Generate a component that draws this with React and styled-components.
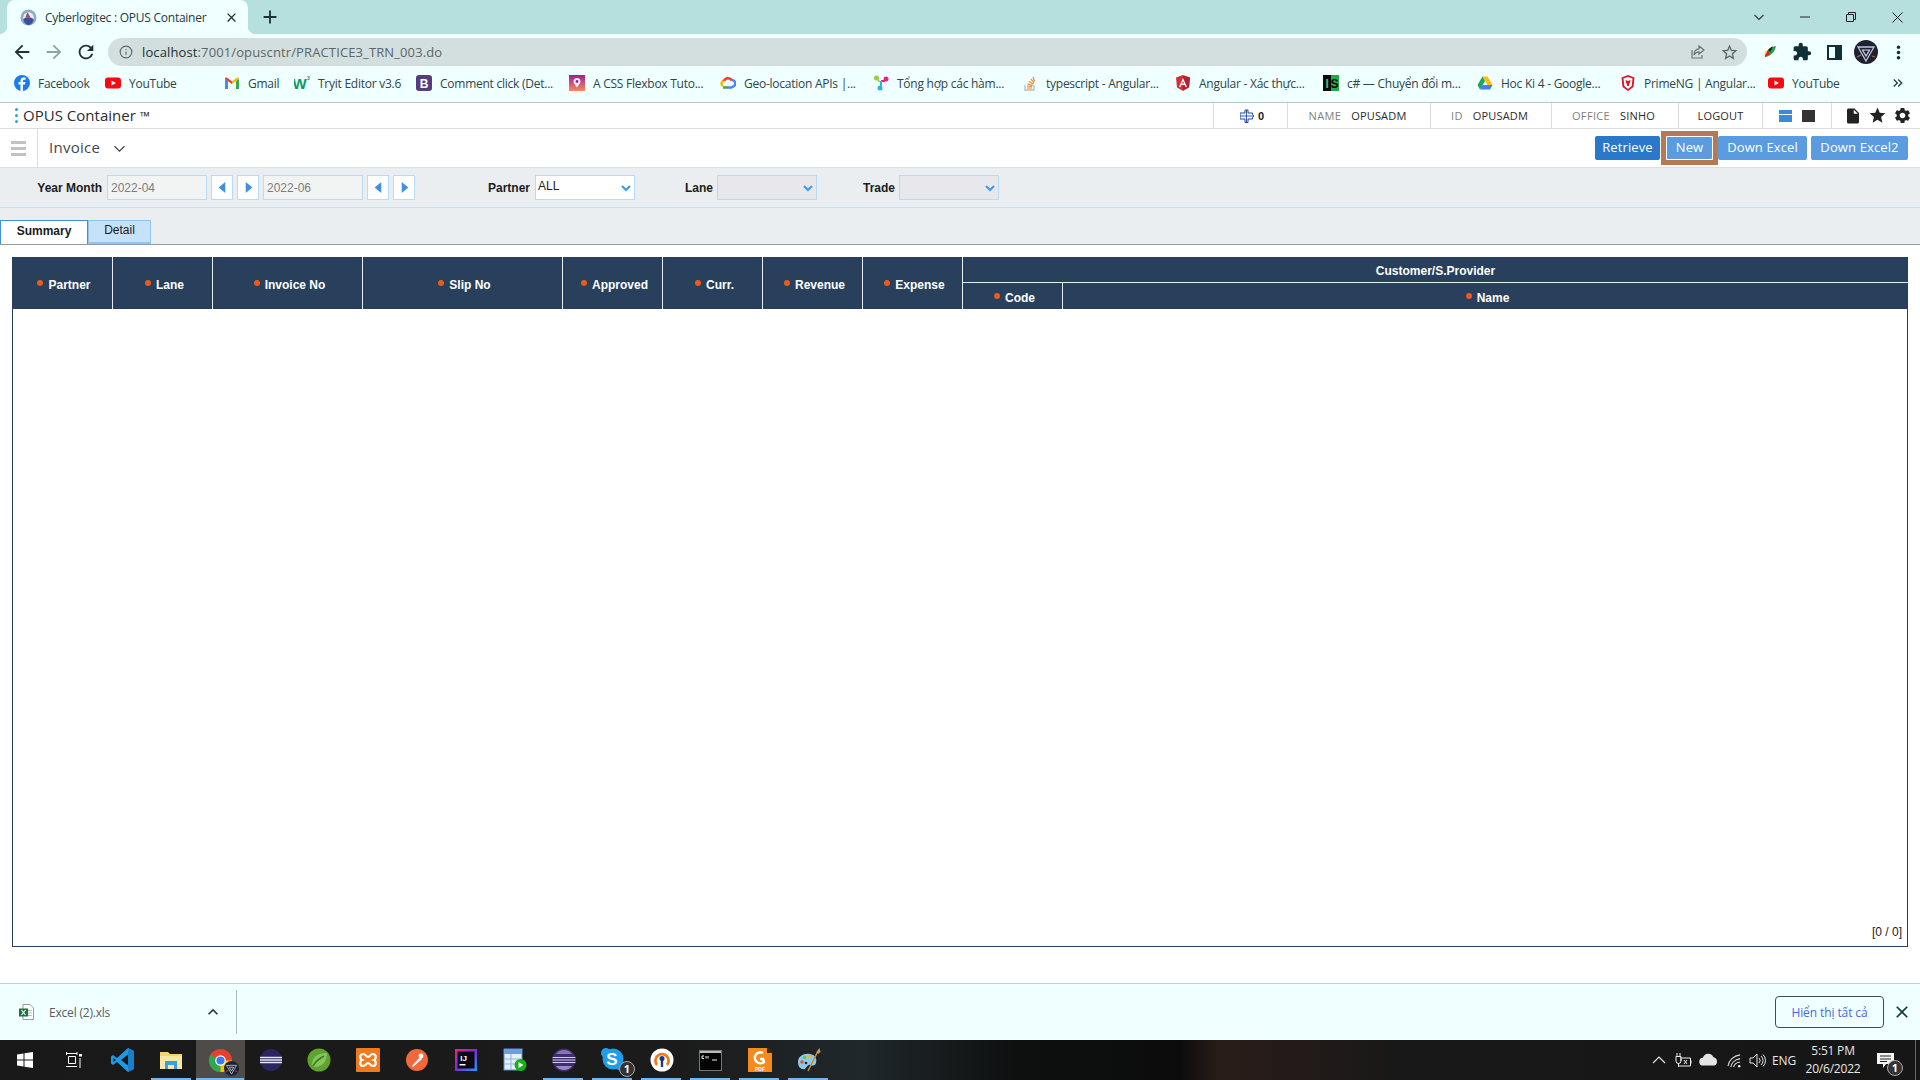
import React from 'react';
import styled, { createGlobalStyle } from 'styled-components';
import { MdArrowBack, MdArrowForward, MdRefresh, MdExtension, MdClose, MdAdd, MdStarBorder, MdMoreVert, MdStar, MdSettings, MdInsertDriveFile, MdExpandLess, MdKeyboardDoubleArrowRight } from 'react-icons/md';
import { Info } from 'lucide-react';

const Global = createGlobalStyle`
  html, body { margin: 0; padding: 0; background: #fff; overflow: hidden; }
  * { box-sizing: border-box; }
  body { font-family: "Open Sans", "Liberation Sans", sans-serif; }
`;
const ui = '"Open Sans", "Noto Sans", sans-serif';
const arial = '"Liberation Sans", Arial, sans-serif';

const Page = styled.div`width:1920px;height:1080px;display:flex;flex-direction:column;overflow:hidden;`;

/* browser chrome */
const TabStrip = styled.div`height:34px;background:#b5e0de;display:flex;align-items:flex-end;padding-left:7px;color:#1f3236;flex:none;`;
const BrowserTab = styled.div`
  position:relative;width:241px;height:34px;background:#f0ffff;border-radius:8px 8px 0 0;display:flex;align-items:center;
  padding:0 9px 0 13px;gap:8px;
  &::before,&::after{content:'';position:absolute;bottom:0;width:8px;height:8px;}
  &::before{left:-8px;background:radial-gradient(circle at 0 0,transparent 8px,#f0ffff 8.5px);}
  &::after{right:-8px;background:radial-gradient(circle at 100% 0,transparent 8px,#f0ffff 8.5px);}
`;
const TabTitle = styled.span`font:12px ${ui};letter-spacing:-.25px;color:#26393d;flex:1;white-space:nowrap;`;
const NewTab = styled.div`margin-left:11px;height:34px;display:flex;align-items:center;font-size:0;`;
const WindowControls = styled.div`margin-left:auto;display:flex;height:34px;align-items:center;`;
const WinBtn = styled.div`width:46px;height:34px;display:flex;align-items:center;justify-content:center;`;

const Toolbar = styled.div`height:32px;background:#f0ffff;display:flex;align-items:center;flex:none;padding-top:4px;`;
const NavGroup = styled.div`width:108px;display:flex;align-items:center;padding-left:11px;gap:10px;color:#1f3236;flex:none;`;
const Omnibox = styled.div`width:1639px;height:28px;border-radius:14px;background:#d3dfdf;display:flex;align-items:center;padding:0 8px 0 11px;color:#5c6a6c;flex:none;`;
const Url = styled.div`font:13px ${ui};letter-spacing:.12px;color:#5b6668;margin-left:9px;flex:1;white-space:nowrap;`;
const UrlHost = styled.span`color:#1f2e30;`;
const OmniActions = styled.div`display:flex;gap:14px;align-items:center;color:#566;`;
const ExtGroup = styled.div`flex:1;display:flex;align-items:center;padding-left:7px;color:#0f3036;`;
const ExtSlot = styled.div`width:32px;display:flex;justify-content:center;align-items:center;flex:none;`;

const Bookmarks = styled.div`height:37px;background:#f0ffff;border-bottom:1px solid #b5c9c9;display:flex;align-items:center;padding:0 0 2px 14px;flex:none;position:relative;`;
const Bookmark = styled.div`width:${p => p.$w}px;display:flex;align-items:center;gap:8px;flex:none;white-space:nowrap;font:12px ${ui};letter-spacing:-.25px;color:#2e4549;`;
const BookmarkMore = styled.div`margin-left:auto;padding-right:14px;display:flex;color:#21403f;`;

/* app header */
const AppHeader = styled.div`height:26px;display:flex;align-items:stretch;border-bottom:1px solid #dcdcdc;background:#fff;flex:none;`;
const AppTitle = styled.div`flex:1;display:flex;align-items:center;padding:0 0 2px 15px;gap:5px;font:15px ${ui};letter-spacing:.02px;color:#2c2c2c;white-space:nowrap;`;
const Dots = styled.span`display:flex;flex-direction:column;gap:3px;padding-top:2px;`;
const Dot = styled.i`display:block;width:3px;height:3px;border-radius:50%;background:#25a4e8;`;
const Tm = styled.span`font-size:13px;margin-left:4px;`;
const HeadCell = styled.div`width:${p => p.$w}px;border-left:1px solid #dcdcdc;display:flex;align-items:center;justify-content:center;gap:${p => p.$gap ?? 10}px;padding:${p => p.$pad ?? '0 3px 0 0'};font:11px ${ui};flex:none;`;
const HeadKey = styled.span`color:#808080;letter-spacing:.35px;`;
const HeadVal = styled.span`color:#2b2b2b;letter-spacing:.18px;`;
const Count = styled.b`font:bold 11px ${arial};color:#222;margin-left:-6px;`;
const Swatch = styled.i`display:block;width:13px;height:12px;background:${p => p.$c};`;
const SplitSwatch = styled(Swatch)`background:linear-gradient(#3a8ad6 0 4px,#fff 4px 5px,#3a8ad6 5px);`;

const ActionBar = styled.div`height:39px;display:flex;align-items:center;border-bottom:1px solid #dedede;background:#fff;flex:none;`;
const Burger = styled.div`width:38px;height:100%;border-right:1px solid #dedede;display:flex;flex-direction:column;justify-content:center;align-items:center;gap:3px;padding-right:1px;`;
const BurgerBar = styled.i`display:block;width:15px;height:3px;background:#c2c2c2;`;
const PageName = styled.div`margin-left:11px;padding-bottom:2px;font:15px ${ui};letter-spacing:.25px;color:#474747;width:65px;`;
const Actions = styled.div`margin-left:auto;padding-right:12px;display:flex;gap:4px;`;
const Btn = styled.button`
  position:relative;height:24px;border:0;border-radius:2px;padding:0 0 2px;width:${p => p.$w}px;
  background:${p => p.$primary ? '#2a78c9' : '#5b9be0'};color:#fff;font:13px ${ui};letter-spacing:.12px;
  ${p => p.$focus ? `
    margin:0 1px 0 2px;box-shadow:inset 0 0 0 1px #fff;
    &::after{content:'';position:absolute;inset:-5px;border:5px solid #b57a55;}
  ` : ''}
`;

/* filter */
const FilterBar = styled.div`height:40px;background:#eaeef0;border-bottom:1px solid #c3e0f7;display:flex;align-items:center;padding:0 0 0 36px;flex:none;`;
const FLabel = styled.label`width:${p => p.$w}px;margin-left:${p => p.$ml ?? 0}px;margin-right:5px;text-align:right;white-space:nowrap;font:bold 12px ${arial};color:#1c1c1c;flex:none;`;
const FInput = styled.div`width:100px;height:25px;background:#f2f4f4;border:1px solid #b9dcf6;font:12px ${arial};color:#7d7d7d;padding:0 0 0 3px;display:flex;align-items:center;flex:none;`;
const Step = styled.div`width:22px;height:25px;margin-left:4px;background:#fff;border:1px solid #b9dcf6;display:flex;align-items:center;justify-content:center;flex:none;`;
const Gap = styled.div`width:4px;flex:none;`;
const FSelect = styled.div`width:100px;height:25px;background:${p => p.$disabled ? '#e8e8ec' : '#fff'};border:1px solid #b9dcf6;font:12px ${arial};color:#222;padding:0 3px 0 2px;display:flex;align-items:center;justify-content:space-between;flex:none;`;
const SelText = styled.span`margin-bottom:3px;`;

/* tabs */
const TabsRow = styled.div`height:37px;background:#eaeef0;border-bottom:1px solid #9a9a9a;display:flex;align-items:flex-end;flex:none;`;
const SheetTab = styled.div`
  width:${p => p.$w}px;height:24px;display:flex;align-items:center;justify-content:center;font:${p => p.$on ? 'bold ' : ''}12px ${arial};color:#1b1b1b;
  background:${p => p.$on ? '#fff' : '#c5e2f8'};border:1px solid ${p => p.$on ? '#3f8fd9' : '#8fc5ef'};border-bottom:${p => p.$on ? '0' : '2px solid #8fc5ef'};padding-bottom:3px;
`;

/* grid */
const Content = styled.div`flex:1;background:#fff;padding:12px 12px 36px;min-height:0;display:flex;`;
const GridBox = styled.div`flex:1;border:1px solid #28405b;border-top:0;display:flex;flex-direction:column;`;
const Table = styled.table`table-layout:fixed;border-collapse:separate;border-spacing:0;margin:0 -1px;width:calc(100% + 2px);`;
const Th = styled.th`
  background:#28405b;color:#fff;font:bold 12px ${arial};padding:3px 0 0 ${p => p.$indent ?? 0}px;height:26px;text-align:center;white-space:nowrap;
  border-right:1px solid #e8edf2;
  &:last-child{border-right:0;}
  border-bottom:${p => p.$line ? '1px solid #e8edf2' : '0'};
`;
const Bullet = styled.i`display:inline-block;width:6px;height:6px;border-radius:50%;background:#f0591e;margin-right:5px;vertical-align:3px;`;
const GridBody = styled.div`flex:1;`;
const GridFoot = styled.div`text-align:right;font:12px ${arial};color:#222;padding:0 5px 7px 0;`;

/* download bar */
const DownloadBar = styled.div`height:57px;background:#f0ffff;border-top:1px solid #bfcfcf;display:flex;align-items:center;flex:none;`;
const FileItem = styled.div`width:237px;height:44px;border-right:1px solid #a9b8b8;display:flex;align-items:center;padding-left:19px;flex:none;color:#1d3a3c;`;
const FileName = styled.span`font:12px ${ui};letter-spacing:-.2px;color:#5a5c5c;margin-left:14px;width:154px;`;
const ShowAll = styled.button`margin-left:auto;width:109px;height:32px;border:1px solid #3f4d4d;border-radius:4px;background:#f0ffff;color:#4a69dc;font:12px ${ui};letter-spacing:-.1px;padding:0;`;
const BarClose = styled.div`width:36px;display:flex;justify-content:center;color:#14373c;font-size:0;`;

/* taskbar */
const Taskbar = styled.div`height:40px;display:flex;align-items:stretch;flex:none;background:linear-gradient(90deg,#191919 0,#1b1b1b 680px,#20282b 860px,#0e0f0f 1020px,#0c0c0c 1180px,#2a1d19 1220px,#181818 1400px,#161616 100%);`;
const TaskBtn = styled.div`
  position:relative;width:49px;display:flex;align-items:center;justify-content:center;flex:none;
  background:${p => p.$active ? '#4f4b49' : 'transparent'};
  ${p => p.$open ? `&::after{content:'';position:absolute;bottom:0;left:${p.$active ? 0 : 4}px;right:${p.$active ? 1 : 5}px;height:2px;background:#73b6ee;}` : ''}
`;
const Badge = styled.span`position:absolute;right:2px;bottom:3px;width:16px;height:16px;border-radius:50%;border:1px solid #aaa;background:#333;color:#fff;font:bold 11px/14px ${ui};text-align:center;`;
const AvatarBadge = styled.span`position:absolute;right:6px;bottom:4px;display:flex;`;
const NotifyBadge = styled(Badge)`right:12px;bottom:4px;`;
const Tray = styled.div`margin-left:auto;display:flex;align-items:center;color:#eee;`;
const TraySlot = styled.div`width:${p => p.$w}px;display:flex;justify-content:center;align-items:center;flex:none;`;
const TrayLang = styled.span`font:12px ${ui};letter-spacing:-.2px;color:#e8e8e8;`;
const Clock = styled.div`width:64px;text-align:center;font:12px/18px ${ui};letter-spacing:-.2px;color:#e8e8e8;white-space:nowrap;`;
const Notify = styled.div`position:relative;width:50px;display:flex;justify-content:center;height:40px;align-items:center;padding-right:9px;`;
const Peek = styled.div`width:5px;height:40px;border-left:1px solid #666;flex:none;`;

const Svg = ({ s = 16, v = '0 0 16 16', children, ...r }) => <svg width={s} height={s} viewBox={v} {...r}>{children}</svg>;

const Favicon = () => <Svg s={17}><circle cx="8" cy="8" r="7.5" fill="#8fa9c9" /><circle cx="8" cy="8" r="5" fill="#e8eef5" /><path d="M3 10c2-3 7-3 10 0-1 3-3 5-5 5s-4-2-5-5z" fill="#3b4f9a" /><path d="M7 3l3 5H5z" fill="#a44a58" /></Svg>;
const Avatar = ({ s = 24 }) => <Svg s={s} v="0 0 24 24"><circle cx="12" cy="12" r="12" fill="#1d2233" /><path d="M4 7h16L12 21z" fill="none" stroke="#c3c6d6" strokeWidth="1.3" /><path d="M8.5 10h7L12 16z" fill="none" stroke="#d0d2de" strokeWidth="1.2" /><path d="M3 17l4-2M18 16l3 1" stroke="#b8643a" strokeWidth="1.3" /></Svg>;
const Facebook = () => <Svg><circle cx="8" cy="8" r="8" fill="#1b7cea" /><path d="M9 16V9.5h2l.4-2.4H9V6c0-.8.3-1.2 1.3-1.2h1.2V2.6C11 2.5 10.300 2.400 9.700 2.400 7.700 2.400 6.500 3.600 6.500 5.700v1.400H4.500v2.400h2V16z" fill="#fff" /></Svg>;
const YouTube = () => <Svg><rect y="2.500" width="16" height="11" rx="3" fill="#f40a0f" /><path d="M6.500 5.500v5L11 8z" fill="#fff" /></Svg>;
const Gmail = () => <Svg><path d="M1 14V4l3 2v8z" fill="#4a87ee" /><path d="M12 14V6l3-2v10z" fill="#38a853" /><path d="M1 4c0-1.500 1.500-1.800 2.500-1L8 6.500 8 9 1 4z" fill="#e33b2e" /><path d="M15 4c0-1.500-1.500-1.800-2.500-1L8 6.500V9l7-5z" fill="#f6b704" /></Svg>;
const W3Text = styled.text`font:900 15px ${arial};fill:#0a9a62;`;
const W3Small = styled.text`font:bold 5px ${arial};fill:#0a9a62;`;
const W3 = () => <Svg><W3Text x="-1.5" y="14">W</W3Text><W3Small x="13" y="5">3</W3Small></Svg>;
const LogoLetter = styled.text`font:bold ${p => p.$s}px ${arial};fill:${p => p.$c};text-anchor:middle;`;
const Bootstrap = () => <Svg><rect width="16" height="16" rx="3" fill="#563d7c" /><LogoLetter x="8" y="12.500" $s={12} $c="#fff">B</LogoLetter></Svg>;
const CssBox = () => <Svg><defs><linearGradient id="cb" x1="0" y1="0" x2="0" y2="1"><stop offset="0" stopColor="#a61a9a" /><stop offset="1" stopColor="#f58a58" /></linearGradient></defs><rect width="16" height="16" fill="url(#cb)" /><path d="M8 3a3.500 3.500 0 0 1 3.500 3.500c0 2-2 3.500-3.500 6-1.500-2.500-3.500-4-3.500-6A3.500 3.500 0 0 1 8 3z" fill="#f5f0f5" /><circle cx="8" cy="6.500" r="1.400" fill="#a61a9a" /></Svg>;
const GCloud = () => <Svg><path d="M3 11a3 3 0 0 1 1-5.500" fill="none" stroke="#f6b704" strokeWidth="2.500" /><path d="M4 6a4.500 4.500 0 0 1 8-.5" fill="none" stroke="#e8402f" strokeWidth="2.500" /><path d="M11.500 5A3.500 3.500 0 0 1 12 12" fill="none" stroke="#4a87ee" strokeWidth="2.500" /><path d="M3 12.500h5" stroke="#34a853" strokeWidth="2.500" /><path d="M8 12.500h4" stroke="#4a87ee" strokeWidth="2.500" /></Svg>;
const Figma = () => <Svg><circle cx="3.500" cy="3" r="2.500" fill="#9ccc3b" /><path d="M4 4l3 3" stroke="#9ccc3b" strokeWidth="1.500" /><circle cx="13" cy="4" r="2.500" fill="#ef1d8c" /><path d="M8 6h4" stroke="#ef1d8c" strokeWidth="2" /><path d="M8 6v5" stroke="#25b5e8" strokeWidth="2" /><circle cx="7" cy="13" r="2.500" fill="#25b5e8" /></Svg>;
const StackO = () => <Svg><path d="M3 10v5h9v-5" fill="none" stroke="#bcbbbb" strokeWidth="1.300" /><path d="M5 13h5M5 11l5 .5M5.500 9l5 1.300M7 6.500l4.300 2.500M9 4l3 4M11 2l1.500 4.500" stroke="#f48024" strokeWidth="1.200" /></Svg>;
const Angular = () => <Svg><path d="M8 0l7 2.500-1 10L8 16l-6-3.500-1-10z" fill="#d52f3e" /><path d="M8 1v14l6-3 1-9.500z" fill="#b3202f" /><path d="M8 3L4 12h1.500l.8-2h3.400l.8 2H12zM7 8.500l1-2.500 1 2.500z" fill="#fff" /></Svg>;
const ISBox = () => <Svg><rect width="8" height="16" fill="#0a0a0a" /><rect x="8" width="8" height="16" fill="#24a84c" /><LogoLetter x="4" y="12.500" $s={12} $c="#3fc26a">I</LogoLetter><LogoLetter x="11.500" y="12.500" $s={12} $c="#0a0a0a">S</LogoLetter></Svg>;
const Drive = () => <Svg><path d="M5.500 1.500h5L15.500 10h-5z" fill="#fbbc04" /><path d="M5.500 1.500L.5 10 3 14.500 8 6z" fill="#1fa463" /><path d="M3 14.500h10l2.500-4.500h-10z" fill="#3f7fef" /></Svg>;
const Prime = () => <Svg><path d="M8 0l6.500 2.500-1 9.500L8 16l-5.500-4-1-9.500z" fill="#d91a2a" /><path d="M3.500 3.500L8 2l4.500 1.500-.8 7.500L8 14l-3.700-3z" fill="#fff" /><path d="M5.500 5l2.500 1 2.500-1-.5 3-1 1v2H7V9L6 8zM8 6v5" fill="#d91a2a" /></Svg>;
const Feather = () => <Svg><circle cx="8" cy="8" r="7.500" fill="#fff" /><path d="M3 13C4 7 8 3 14 2c-1 5-4 9-10 11z" fill="#17a74a" /><path d="M3 13c0-3 1-5 3-7l2 4z" fill="#e8241a" /><path d="M6 6c1-1.500 3-3 5-3.500L8 8z" fill="#1a1a1a" /><path d="M2 12l2-6 1 2z" fill="#f0e020" /></Svg>;
const PanelIcon = () => <Svg s={15} v="0 0 15 15"><path d="M0 0h15v15H0z" fill="#0f3036" /><rect x="2" y="2" width="6" height="11" fill="#f0ffff" /></Svg>;
const Share = () => <Svg><path d="M2 6v8h10v-3" fill="none" stroke="#667274" strokeWidth="1.200" /><path d="M9 2l5 4-5 4V7.800C6.500 7.800 5 9 4 11c0-3.500 2-6 5-6.200z" fill="none" stroke="#667274" strokeWidth="1.200" /></Svg>;
const Tri = ({ left }) => <Svg s={11} v="0 0 10 10"><path d={left ? 'M7.500 0v10L1.500 5z' : 'M2.500 0v10l6-5z'} fill="#3e90e4" /></Svg>;
const SelArrow = () => <Svg s={10} v="0 0 10 10"><path d="M1 3l4 4 4-4" fill="none" stroke="#3f9bee" strokeWidth="2.200" /></Svg>;
const Chev = ({ c = '#444', s = 10 }) => <Svg s={s} v="0 0 10 10"><path d="M0.500 3l4.500 4.500L9.500 3" fill="none" stroke={c} strokeWidth="1.100" /></Svg>;
const Crossbell = () => <Svg s={14} v="0 0 14 14"><path d="M5 1h3v3h4.500v1.500L14 7l-1.500 1.500V10H8v3.500H5V10H0V4h5z" fill="#fff" stroke="#1f45a8" strokeWidth="1" /><path d="M6.500 1v13M0 7h13" stroke="#1f45a8" strokeWidth=".9" /></Svg>;
const ExcelFile = () => <Svg s={16} v="0 0 16 16"><path d="M4 .5h7l3.500 3.500v11.500H4z" fill="#fff" stroke="#9a9a9a" /><rect x="9" y="6" width="4" height="1" fill="#a9c8b4" /><rect x="9" y="8.500" width="4" height="1" fill="#a9c8b4" /><rect x="9" y="11" width="4" height="1" fill="#a9c8b4" /><rect x="0" y="4.500" width="9" height="8" fill="#1d7044" /><path d="M2.500 6l4 5M6.500 6l-4 5" stroke="#fff" strokeWidth="1.200" /></Svg>;

const WinLogo = () => <Svg v="0 0 16 16"><path d="M0 2.500l6.500-1V7.500H0zM7.500 1.300L16 0v7.500H7.500zM0 8.500h6.500v6L0 13.500zM7.500 8.500H16V16l-8.500-1.300z" fill="#fff" /></Svg>;
const TaskView = () => <Svg s={16}><g fill="none" stroke="#fff" strokeWidth="1"><path d="M0 1.500h11M0 14.500h11M2.500 4.500h7v7h-7zM.5 0v3M11 0v3" /><path d="M14 6v10" /></g><rect x="13" y="2" width="3" height="2.500" fill="#fff" /></Svg>;
const VSCode = () => <Svg s={24} v="0 0 24 24"><path d="M17 0l6 3v18l-6 3L6 14l-4 3-2-1.500V8.500L2 7l4 3z" fill="#1f9ae8" /><path d="M17 0l6 3v18l-6 3z" fill="#1a7fc8" /><path d="M17 6.500v11L10 12z" fill="#191919" /><path d="M2.500 10L5 12l-2.500 2z" fill="#191919" /></Svg>;
const Folder = () => <Svg s={23} v="0 0 23 23"><path d="M0 3h8l2 2h12v15H0z" fill="#f6d56a" /><path d="M0 7h22v13H0z" fill="#fbe7a0" /><path d="M5 20v-8h12v8h-3v-4H8v4z" fill="#2ea4e8" /></Svg>;
const ChromeLogo = () => <Svg s={23} v="0 0 24 24"><circle cx="12" cy="12" r="12" fill="#e8402f" /><path d="M12 12L1.600 6A12 12 0 0 0 12 24l5-10z" fill="#2fa84e" /><path d="M12 12h12a12 12 0 0 1-12 12z" fill="#f6c20e" /><circle cx="12" cy="12" r="5.500" fill="#fff" /><circle cx="12" cy="12" r="4.300" fill="#3a7de8" /></Svg>;
const EclipseDark = () => <Svg s={24} v="0 0 24 24"><path d="M10 0a12 12 0 0 0 0 24A12 12 0 0 1 10 0z" fill="#f08a12" /><circle cx="13" cy="12" r="11" fill="#2b2560" /><path d="M2 9.500h22M2 12h22M2 14.500h22" stroke="#e8e8f5" strokeWidth="1.300" /></Svg>;
const Spring = () => <Svg s={24} v="0 0 24 24"><circle cx="12" cy="12" r="11.500" fill="#5fa32f" /><path d="M5 17C5 9 11 5 20 5c0 9-5 14-13 14z" fill="#86c55d" /><path d="M6 18c3-5 7-8 11-10" stroke="#3e7a1c" strokeWidth="1.500" fill="none" /></Svg>;
const Xampp = () => <Svg s={24} v="0 0 24 24"><rect width="24" height="24" rx="1" fill="#f07a1c" /><path d="M7 6c3 0 3 3 5 3s2-3 5-3c3.500 0 3.500 5 1 6 2.500 1 2.500 6-1 6-3 0-3-3-5-3s-2 3-5 3c-3.500 0-3.500-5-1-6-2.500-1-2.500-6 1-6z" fill="none" stroke="#fff" strokeWidth="2.200" /></Svg>;
const Postman = () => <Svg s={24} v="0 0 24 24"><circle cx="12" cy="12" r="11" fill="#f3683a" /><path d="M7 18l8-9 2 2-9 8z" fill="#fff" /><circle cx="16" cy="8" r="2.400" fill="#fff" /></Svg>;
const Intellij = () => <Svg s={24} v="0 0 24 24"><defs><linearGradient id="ij" x1="0" y1="0" x2="1" y2="1"><stop offset="0" stopColor="#e8277a" /><stop offset=".5" stopColor="#7a2ed8" /><stop offset="1" stopColor="#1f9de8" /></linearGradient></defs><rect width="22" height="22" x="1" y="1" fill="url(#ij)" /><rect x="3.500" y="3.500" width="17" height="17" fill="#0a0a12" /><LogoLetter x="9.500" y="12.500" $s={8} $c="#fff">IJ</LogoLetter><rect x="5.500" y="16" width="6" height="1.500" fill="#fff" /></Svg>;
const TablePlay = () => <Svg s={24} v="0 0 24 24"><rect x="1" y="1" width="18" height="21" fill="#e6eef8" stroke="#5b8fd0" /><rect x="1" y="1" width="18" height="5" fill="#6d9fde" /><path d="M1 11h18M1 16h18M8 6v16" stroke="#8fb4e4" /><circle cx="17.500" cy="17" r="6" fill="#12b312" /><path d="M15.500 14v6l5-3z" fill="#fff" /></Svg>;
const EclipsePurple = () => <Svg s={24} v="0 0 24 24"><circle cx="12" cy="12" r="11.500" fill="#3f2f70" /><path d="M.5 9.500h23M.5 12h23M.5 14.500h23" stroke="#d8c9ee" strokeWidth="1.200" /><path d="M4 6a10 10 0 0 1 16 0z" fill="#8a72b8" /><path d="M4 18a10 10 0 0 0 16 0z" fill="#9a86c4" /></Svg>;
const Skype = () => <Svg s={24} v="0 0 24 24"><circle cx="12" cy="11" r="10.500" fill="#1f9ee8" /><circle cx="5" cy="5" r="5" fill="#1f9ee8" /><circle cx="18" cy="17" r="5" fill="#1f9ee8" /><LogoLetter x="11" y="17" $s={17} $c="#fff">S</LogoLetter></Svg>;
const OpenVpn = () => <Svg s={24} v="0 0 24 24"><circle cx="12" cy="12" r="11.500" fill="#fff" /><path d="M6 18a8 8 0 1 1 12 0l-2-2a5.200 5.200 0 1 0-8 0z" fill="#ee7a1c" /><circle cx="12" cy="10.500" r="2.500" fill="#1a3a7a" /><rect x="10.800" y="11" width="2.400" height="8" fill="#1a3a7a" /></Svg>;
const Cmd = () => <Svg s={23} v="0 0 23 23"><rect x="0.500" y="1.500" width="22" height="20" fill="#050505" stroke="#777" /><rect x="1" y="2" width="21" height="2" fill="#bbb" /><path d="M3 7h2M3 9.500h2M3 7v2.500M7 7v2.500M9 7v2.500M13 11h5" stroke="#eee" strokeWidth="1" /></Svg>;
const PdfMark = () => <Svg s={24} v="0 0 24 24"><path d="M0 0h19l5 5v19H0z" fill="#f58a1f" /><path d="M19 0h2l3 3v2h-5z" fill="#3a2a10" /><path d="M15 5a5.500 5.500 0 1 0 1 9l-1-3h-3" fill="none" stroke="#fff" strokeWidth="2.500" /><LogoLetter x="12" y="22.500" $s={5} $c="#fff">PDF</LogoLetter></Svg>;
const Paint = () => <Svg s={24} v="0 0 24 24"><path d="M1 14c0-6 6-9 12-8s7 5 6 9c-.8 3-4 3-6 2-2-1-3 2-5 4-4 1-7-2-7-7z" fill="#8ecae8" /><circle cx="5" cy="14" r="1.800" fill="#e8503a" /><circle cx="7.500" cy="9.500" r="1.800" fill="#6cc24a" /><circle cx="12" cy="8.500" r="1.800" fill="#f6b704" /><circle cx="9" cy="15" r="1.300" fill="#223" /><path d="M11 23L21 3" stroke="#c88a3c" strokeWidth="1.500" /><path d="M19.500 4l3-4 1 4-2.500 2z" fill="#c89a5c" /></Svg>;

const Cloud = () => <Svg s={20} v="0 0 18 12"><path d="M4 11a3.500 3.500 0 0 1-.5-7A5 5 0 0 1 13 3.500a4 4 0 0 1 1 7.500z" fill="#e4e4e4" /></Svg>;
const Wifi = () => <Svg s={15} v="0 0 16 16"><g fill="none" stroke="#ddd" strokeWidth="1.100"><path d="M1 14C2 8 7 3 14 2" /><path d="M4 15c.5-4 4-8 10-9" /><path d="M7 15c.5-2.500 3-5 7-5.500" /></g><circle cx="13" cy="14" r="1.300" fill="#fff" /></Svg>;
const Speaker = () => <Svg s={17} v="0 0 17 17"><g fill="none" stroke="#e6e6e6" strokeWidth="1"><path d="M1 6v5h3l4 4V2L4 6z" /><path d="M10 6a3.500 3.500 0 0 1 0 5M12 4a6 6 0 0 1 0 9M14 2.500a8.500 8.500 0 0 1 0 12" /></g></Svg>;
const Plug = () => <Svg s={17} v="0 0 17 17"><g fill="none" stroke="#eee" strokeWidth="1"><path d="M6 5v4M1 9V4.500h5V9a2.500 2.500 0 0 1-5 0M3.500 11v4M2 4.500V1M5 4.500V1" /><path d="M7 6h8.500v8H3.500" /><path d="M16 8.500v3M9 8l3 4M12 8l-3 4" /></g></Svg>;
const Caret = () => <Svg s={14} v="0 0 14 14"><path d="M1 10l6-6 6 6" fill="none" stroke="#eee" strokeWidth="1.100" /></Svg>;
const Bubble = () => <Svg s={17} v="0 0 17 17"><path d="M0 1h17v11H9l-3 4v-4H0z" fill="#f4f4f4" /><path d="M3 4h11M3 7h11M3 9.500h7" stroke="#222" /></Svg>;

const marks = [
  [Facebook, 'Facebook', 91], [YouTube, 'YouTube', 119], [Gmail, 'Gmail', 70], [W3, 'Tryit Editor v3.6', 122],
  [Bootstrap, 'Comment click (Det...', 153], [CssBox, 'A CSS Flexbox Tuto...', 151], [GCloud, 'Geo-location APIs  |...', 153],
  [Figma, 'Tổng hợp các hàm...', 149], [StackO, 'typescript - Angular...', 153], [Angular, 'Angular - Xác thực...', 148],
  [ISBox, 'c# — Chuyển đổi m...', 154], [Drive, 'Hoc Ki 4 - Google...', 143], [Prime, 'PrimeNG | Angular...', 148], [YouTube, 'YouTube', 80],
];

const Head = ({ children, ...r }) => <Th $indent={4} {...r}><Bullet />{children}</Th>;

export default function App() {
  return (
    <Page>
      <Global />
      <TabStrip>
        <BrowserTab>
          <Favicon />
          <TabTitle>Cyberlogitec : OPUS Container</TabTitle>
          <MdClose size={15} />
        </BrowserTab>
        <NewTab><MdAdd size={22} /></NewTab>
        <WindowControls>
          <WinBtn><Chev c="#333" /></WinBtn>
          <WinBtn><Svg s={10} v="0 0 10 10"><path d="M0 5h10" stroke="#222" /></Svg></WinBtn>
          <WinBtn><Svg s={10} v="0 0 10 10"><path d="M.5 2.500h7v7h-7zM2.500 2.500v-2h7v7h-2" fill="none" stroke="#222" /></Svg></WinBtn>
          <WinBtn><Svg s={11} v="0 0 11 11"><path d="M.5.500l10 10M10.500.500l-10 10" stroke="#222" /></Svg></WinBtn>
        </WindowControls>
      </TabStrip>
      <Toolbar>
        <NavGroup>
          <MdArrowBack size={22} />
          <MdArrowForward size={22} color="#8fa3a5" />
          <MdRefresh size={22} />
        </NavGroup>
        <Omnibox>
          <Info size={14} />
          <Url><UrlHost>localhost</UrlHost>:7001/opuscntr/PRACTICE3_TRN_003.do</Url>
          <OmniActions>
            <Share />
            <MdStarBorder size={19} />
          </OmniActions>
        </Omnibox>
        <ExtGroup>
          <ExtSlot><Feather /></ExtSlot>
          <ExtSlot><MdExtension size={20} /></ExtSlot>
          <ExtSlot><PanelIcon /></ExtSlot>
          <ExtSlot><Avatar /></ExtSlot>
          <ExtSlot><MdMoreVert size={21} /></ExtSlot>
        </ExtGroup>
      </Toolbar>
      <Bookmarks>
        {marks.map(([Icon, label, w], i) => (
          <Bookmark key={i} $w={w}><Icon />{label}</Bookmark>
        ))}
        <BookmarkMore><MdKeyboardDoubleArrowRight size={16} /></BookmarkMore>
      </Bookmarks>

      <AppHeader>
        <AppTitle>
          <Dots><Dot /><Dot /><Dot /></Dots>
          <span>OPUS Container<Tm>™</Tm></span>
        </AppTitle>
        <HeadCell $w={74} $pad="0 0 0 3px"><Crossbell /><Count>0</Count></HeadCell>
        <HeadCell $w={143}><HeadKey>NAME</HeadKey><HeadVal>OPUSADM</HeadVal></HeadCell>
        <HeadCell $w={121}><HeadKey>ID</HeadKey><HeadVal>OPUSADM</HeadVal></HeadCell>
        <HeadCell $w={127}><HeadKey>OFFICE</HeadKey><HeadVal>SINHO</HeadVal></HeadCell>
        <HeadCell $w={84} $pad="0"><HeadVal>LOGOUT</HeadVal></HeadCell>
        <HeadCell $w={69} $pad="0"><SplitSwatch /><Swatch $c="#333" /></HeadCell>
        <HeadCell $w={89} $gap={6} $pad="0 0 0 4px">
          <MdInsertDriveFile size={18} color="#222" />
          <MdStar size={19} color="#222" />
          <MdSettings size={19} color="#222" />
        </HeadCell>
      </AppHeader>

      <ActionBar>
        <Burger><BurgerBar /><BurgerBar /><BurgerBar /></Burger>
        <PageName>Invoice</PageName>
        <Chev c="#444" s={11} />
        <Actions>
          <Btn $primary $w={65}>Retrieve</Btn>
          <Btn $w={47} $focus>New</Btn>
          <Btn $w={89}>Down Excel</Btn>
          <Btn $w={97}>Down Excel2</Btn>
        </Actions>
      </ActionBar>

      <FilterBar>
        <FLabel $w={66}>Year Month</FLabel>
        <FInput>2022-04</FInput>
        <Step><Tri left /></Step>
        <Step><Tri /></Step>
        <Gap />
        <FInput>2022-06</FInput>
        <Step><Tri left /></Step>
        <Step><Tri /></Step>
        <FLabel $w={42} $ml={73}>Partner</FLabel>
        <FSelect><SelText>ALL</SelText><SelArrow /></FSelect>
        <FLabel $w={27} $ml={50}>Lane</FLabel>
        <FSelect $disabled><span /><SelArrow /></FSelect>
        <FLabel $w={31} $ml={46}>Trade</FLabel>
        <FSelect $disabled><span /><SelArrow /></FSelect>
      </FilterBar>

      <TabsRow>
        <SheetTab $on $w={88}>Summary</SheetTab>
        <SheetTab $w={63}>Detail</SheetTab>
      </TabsRow>

      <Content>
        <GridBox>
          <Table>
            <colgroup>
              {[101, 100, 150, 200, 100, 100, 100, 100, 100].map((w, i) => <col key={i} width={w} />)}
              <col />
            </colgroup>
            <thead>
              <tr>
                <Head rowSpan={2}>Partner</Head>
                <Head rowSpan={2}>Lane</Head>
                <Head rowSpan={2}>Invoice No</Head>
                <Head rowSpan={2}>Slip No</Head>
                <Head rowSpan={2}>Approved</Head>
                <Head rowSpan={2}>Curr.</Head>
                <Head rowSpan={2}>Revenue</Head>
                <Head rowSpan={2}>Expense</Head>
                <Th colSpan={2} $line>Customer/S.Provider</Th>
              </tr>
              <tr>
                <Head>Code</Head>
                <Head>Name</Head>
              </tr>
            </thead>
          </Table>
          <GridBody />
          <GridFoot>[0 / 0]</GridFoot>
        </GridBox>
      </Content>

      <DownloadBar>
        <FileItem>
          <ExcelFile />
          <FileName>Excel (2).xls</FileName>
          <MdExpandLess size={20} />
        </FileItem>
        <ShowAll>Hiển thị tất cả</ShowAll>
        <BarClose><MdClose size={20} /></BarClose>
      </DownloadBar>

      <Taskbar>
        <TaskBtn><WinLogo /></TaskBtn>
        <TaskBtn><TaskView /></TaskBtn>
        <TaskBtn><VSCode /></TaskBtn>
        <TaskBtn $open><Folder /></TaskBtn>
        <TaskBtn $open $active><ChromeLogo /><AvatarBadge><Avatar s={15} /></AvatarBadge></TaskBtn>
        <TaskBtn><EclipseDark /></TaskBtn>
        <TaskBtn><Spring /></TaskBtn>
        <TaskBtn><Xampp /></TaskBtn>
        <TaskBtn><Postman /></TaskBtn>
        <TaskBtn><Intellij /></TaskBtn>
        <TaskBtn><TablePlay /></TaskBtn>
        <TaskBtn $open><EclipsePurple /></TaskBtn>
        <TaskBtn $open><Skype /><Badge>1</Badge></TaskBtn>
        <TaskBtn $open><OpenVpn /></TaskBtn>
        <TaskBtn $open><Cmd /></TaskBtn>
        <TaskBtn $open><PdfMark /></TaskBtn>
        <TaskBtn $open><Paint /></TaskBtn>
        <Tray>
          <TraySlot $w={24}><Caret /></TraySlot>
          <TraySlot $w={25}><Plug /></TraySlot>
          <TraySlot $w={25}><Cloud /></TraySlot>
          <TraySlot $w={26}><Wifi /></TraySlot>
          <TraySlot $w={20}><Speaker /></TraySlot>
          <TraySlot $w={34}><TrayLang>ENG</TrayLang></TraySlot>
          <Clock>5:51 PM<br />20/6/2022</Clock>
          <Notify><Bubble /><NotifyBadge>1</NotifyBadge></Notify>
          <Peek />
        </Tray>
      </Taskbar>
    </Page>
  );
}
